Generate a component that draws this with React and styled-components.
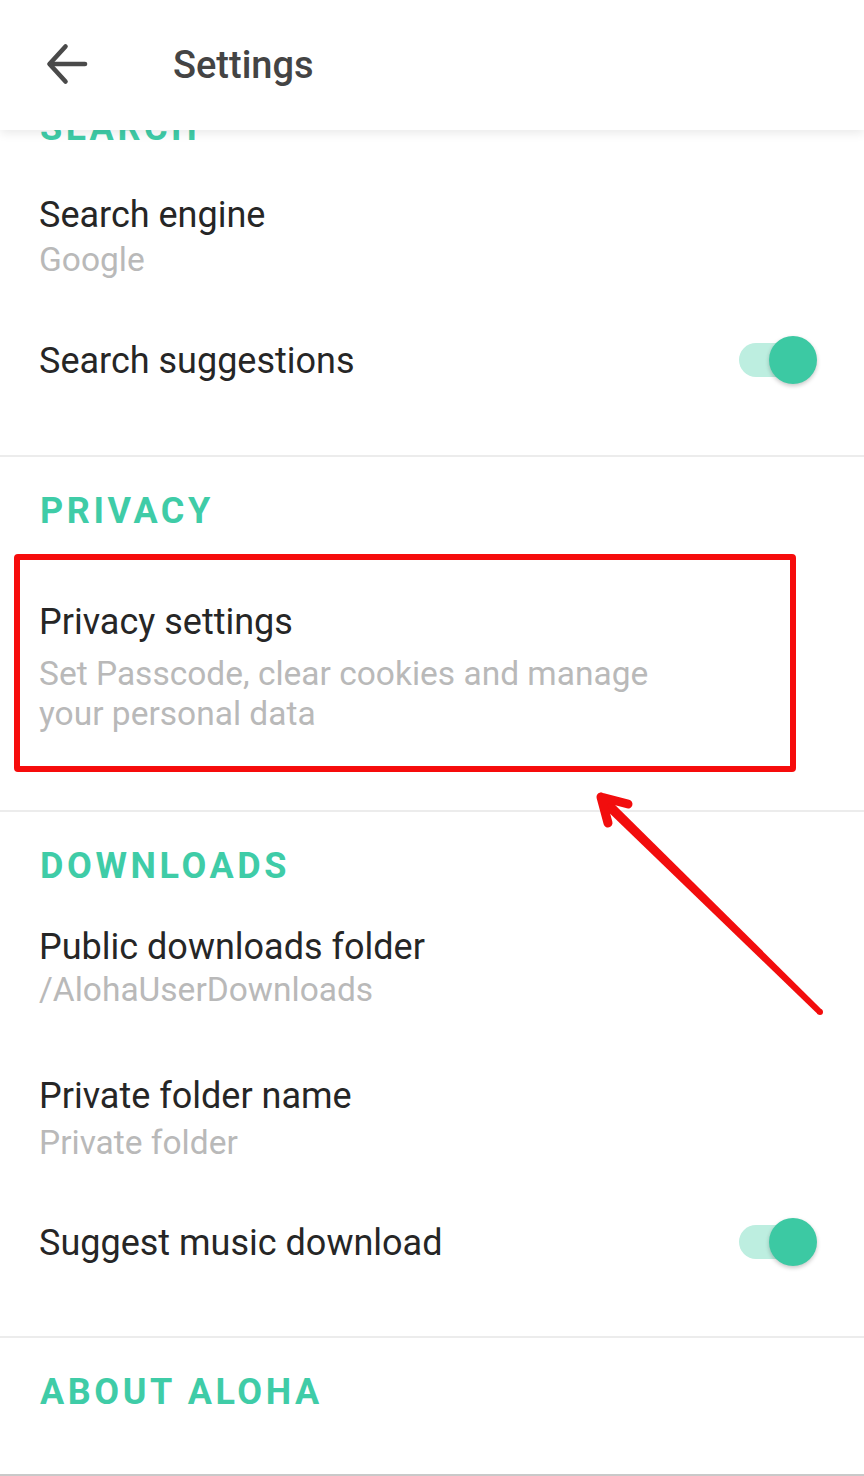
import React from 'react';
import styled, { createGlobalStyle } from 'styled-components';

const GlobalStyle = createGlobalStyle`
    html, body {
        margin: 0;
        padding: 0;
        background: #ffffff;
    }
    body {
        font-family: Roboto, "Noto Sans", "Liberation Sans", sans-serif;
        -webkit-font-smoothing: antialiased;
    }
`;

const Page = styled.div`
    position: relative;
    width: 864px;
    height: 1476px;
    overflow: hidden;
    background: #ffffff;
    display: flex;
    flex-direction: column;
`;

const Header = styled.header`
    position: relative;
    z-index: 2;
    flex: none;
    height: 130px;
    display: flex;
    align-items: center;
    gap: 85px;
    padding-left: 46px;
    background: #ffffff;
    box-shadow: 0 3px 10px rgba(0, 0, 0, 0.09);
`;

const BackButton = styled.button`
    width: 42px;
    height: 42px;
    padding: 0;
    border: none;
    background: none;
    display: flex;
    align-items: center;
    justify-content: center;
    color: #4a4a4a;
    margin-top: -2px;
`;

const Title = styled.h1`
    margin: 0;
    font-size: 38px;
    font-weight: 500;
    color: #444444;
    line-height: 44px;
`;

const Content = styled.main`
    position: relative;
    z-index: 1;
    margin-top: -24px;
    flex: 1;
    display: flex;
    flex-direction: column;
    border-bottom: 2px solid #c9c9c9;
`;

const Section = styled.section`
    padding: ${p => p.$top}px 0 ${p => p.$bottom}px;
    border-bottom: ${p => (p.$last ? 'none' : '2px solid #ececec')};
    flex: ${p => (p.$last ? 1 : 'none')};
`;

const Label = styled.h2`
    margin: 0;
    padding-left: 40px;
    font-size: 36px;
    font-weight: 700;
    line-height: 44px;
    letter-spacing: 3.6px;
    color: #3fcca7;
    text-transform: uppercase;
`;

const Row = styled.div`
    display: flex;
    align-items: center;
    justify-content: space-between;
    padding: ${p => p.$top}px 55px ${p => p.$bottom}px 39px;
`;

const Text = styled.div`
    display: flex;
    flex-direction: column;
`;

const ItemTitle = styled.div`
    font-size: 36px;
    line-height: 44px;
    color: #262626;
`;

const ItemValue = styled.div`
    font-size: 33.5px;
    line-height: ${p => p.$lh || 43}px;
    margin-top: ${p => p.$gap || 0}px;
    color: #b9b9b9;
`;

const Highlight = styled.div`
    margin: 21px 68px 0 14px;
    border: 6px solid #f60c0c;
    border-radius: 4px;
    padding: 40px 0 32px 19px;
`;

const Track = styled.div`
    position: relative;
    width: 70px;
    height: 34px;
    border-radius: 17px;
    background: #bdeee0;
    margin-top: -2px;
`;

const Thumb = styled.div`
    position: absolute;
    top: 50%;
    right: -8px;
    width: 48px;
    height: 48px;
    margin-top: -24px;
    border-radius: 50%;
    background: #3cc9a3;
    box-shadow: 0 2px 4px rgba(0, 0, 0, 0.22);
`;

const Annotation = styled.svg`
    position: absolute;
    left: 0;
    top: 0;
    z-index: 3;
    pointer-events: none;
`;

function Toggle() {
    return (
        <Track>
            <Thumb />
        </Track>
    );
}

function Item({ title, value, top, bottom, gap, lh, toggle }) {
    return (
        <Row $top={top} $bottom={bottom}>
            <Text>
                <ItemTitle>{title}</ItemTitle>
                {value && <ItemValue $gap={gap} $lh={lh}>{value}</ItemValue>}
            </Text>
            {toggle && <Toggle />}
        </Row>
    );
}

export default function App() {
    return (
        <Page>
            <GlobalStyle />
            <Header>
                <BackButton aria-label="Back">
                    <svg width="42" height="42" viewBox="0 0 42 42" fill="none" stroke="currentColor" strokeWidth="4.6" strokeLinecap="round" strokeLinejoin="round">
                        <path d="M39 21H4" />
                        <path d="M19.5 3.5L3.5 21L19.5 38.5" />
                    </svg>
                </BackButton>
                <Title>Settings</Title>
            </Header>

            <Content>
                <Section $top={0} $bottom={42}>
                    <Label>Search</Label>
                    <Item title="Search engine" value="Google" top={43} bottom={29} gap={1} />
                    <Item title="Search suggestions" toggle top={29} bottom={30} />
                </Section>

                <Section $top={32} $bottom={38}>
                    <Label>Privacy</Label>
                    <Highlight>
                        <ItemTitle>Privacy settings</ItemTitle>
                        <ItemValue $gap={10} $lh={40}>
                            Set Passcode, clear cookies and manage
                            <br />
                            your personal data
                        </ItemValue>
                    </Highlight>
                </Section>

                <Section $top={32} $bottom={68}>
                    <Label>Downloads</Label>
                    <Item title="Public downloads folder" value="/AlohaUserDownloads" top={37} bottom={30} lh={41} />
                    <Item title="Private folder name" value="Private folder" top={34} bottom={30} gap={3} />
                    <Item title="Suggest music download" toggle top={27} bottom={3} />
                </Section>

                <Section $top={32} $bottom={0} $last>
                    <Label>About Aloha</Label>
                </Section>
            </Content>

            <Annotation width="864" height="1476" viewBox="0 0 864 1476">
                <polygon points="822.1,1009.9 606.5,796.4 599.5,803.6 817.9,1014.2" fill="#f20d0d" />
                <circle cx="820" cy="1012" r="3" fill="#f20d0d" />
                <path d="M601 797 L608 823 M601 797 L628 804" stroke="#f20d0d" strokeWidth="9" strokeLinecap="round" fill="none" />
            </Annotation>
        </Page>
    );
}
